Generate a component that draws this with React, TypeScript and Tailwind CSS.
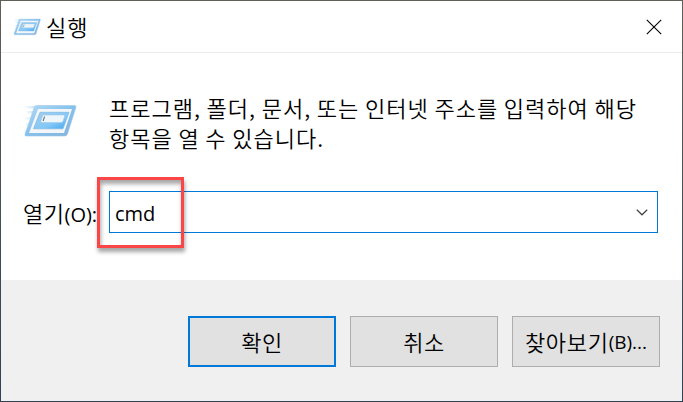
import React from 'react';

type IconProps = { className: string };

const RunIcon: React.FC<IconProps> = ({ className }) => (
  <svg className={className} viewBox="0 0 54 34" fill="none">
    <defs>
      <linearGradient id="frame" x1="0" y1="0" x2="1" y2="1">
        <stop offset="0" stopColor="#b4dbf6" />
        <stop offset="0.5" stopColor="#84c1ee" />
        <stop offset="1" stopColor="#86b2da" />
      </linearGradient>
      <linearGradient id="panel" x1="0" y1="0" x2="1" y2="1">
        <stop offset="0" stopColor="#a5cdeb" />
        <stop offset="0.6" stopColor="#84c8f6" />
        <stop offset="1" stopColor="#41a5ee" />
      </linearGradient>
      <linearGradient id="trail" x1="0" y1="0" x2="1" y2="0">
        <stop offset="0" stopColor="#d5eafa" stopOpacity="0" />
        <stop offset="1" stopColor="#b5d9f2" />
      </linearGradient>
    </defs>
    <path d="M1 2h13v2.500H1zM4 7h9v2.500H4zM0 13h11v2.500H0zM3 19h6v2.500H3zM0 25h7v2.500H0z" fill="url(#trail)" />
    <path d="M13.500 1.500H51.500q2 0 1.400 2L44.500 30q-.6 2-2.500 2H3q-1.500 0-1-2L11.500 3q.5-1.500 2-1.500z" fill="url(#frame)" stroke="#a0c8e6" strokeWidth=".6" />
    <path d="M15 5h34l-8 24H6z" fill="#f4f6fa" />
    <path d="M17 8.300H46l-6 16.500H10.500z" fill="url(#panel)" stroke="#7db8e4" strokeWidth=".7" />
    <path d="M20.500 11h20q1.500 0 1 1.500l-1.400 4.500q-.5 1.500-2 1.500H19q-1.500 0-1-1.500l1.300-4.500q.4-1.500 1.200-1.500z" fill="#eef5fb" stroke="#a3caea" strokeWidth=".6" />
    <path d="M21.500 12.500l-1.300 4.500" stroke="#59636c" strokeWidth="1" />
  </svg>
);

const CloseIcon: React.FC<IconProps> = ({ className }) => (
  <svg className={className} viewBox="0 0 16 16" fill="none">
    <path d="M.8.8l14.400 14.400M15.200.8L.8 15.200" stroke="#000" strokeWidth="1.100" />
  </svg>
);

const ChevronIcon: React.FC<IconProps> = ({ className }) => (
  <svg className={className} viewBox="0 0 12 7" fill="none">
    <path d="M.8.800L6 5.800 11.200.8" stroke="#444" strokeWidth="1.200" />
  </svg>
);

const App: React.FC = () => (
  <div className="flex h-[402px] w-[683px] flex-col bg-gradient-to-b from-[#605f58] to-[#2f4254] p-px font-['Open_Sans','Noto_Sans_CJK_KR',sans-serif] text-black">
    {/* Title bar */}
    <header className="flex h-[52px] shrink-0 items-center border-b border-[#ececec] bg-white pr-[20px] pl-[12px]">
      <RunIcon className="h-[18px] w-[28px]" />
      <h1 className="ml-[5px] pb-[2px] font-['Noto_Sans_CJK_KR',sans-serif] text-[22px] leading-[30px] font-[350] tracking-[1px]">실행</h1>
      <CloseIcon className="ml-auto h-4 w-4" />
    </header>

    {/* Message and command input */}
    <main className="h-[227px] shrink-0 bg-white pr-[24px] pl-[22px]">
      <div className="flex pt-[39px]">
        <RunIcon className="mt-[12px] h-[34px] w-[54px]" />
        <p className="ml-[32px] font-['Noto_Sans_CJK_KR',sans-serif] text-[22px] leading-[30px] font-[350] tracking-[1px] whitespace-nowrap [word-spacing:-0.2px]">
          프로그램, 폴더, 문서, 또는 인터넷 주소를 입력하여 해당
          <br />
          항목을 열 수 있습니다.
        </p>
      </div>

      <div className="relative mt-[39px] flex items-center">
        <label htmlFor="command" className="flex w-[86px] items-center whitespace-nowrap">
          <span className="font-['Noto_Sans_CJK_KR',sans-serif] text-[22px] leading-[30px] font-[350] tracking-[0.5px]">열기</span>
          <span className="pt-[5px] text-[20px] leading-[30px]">(O):</span>
        </label>
        <div className="flex h-[42px] flex-1 items-center border border-[#0078d7] pr-[9px] pl-[5px]">
          <input
            id="command"
            defaultValue="cmd"
            className="min-w-0 flex-1 pt-[3px] text-[20px] leading-[30px] outline-none"
          />
          <ChevronIcon className="h-[7px] w-[12px]" />
        </div>
        {/* Highlight around the typed command */}
        <div className="absolute top-[-14px] left-[74px] h-[71px] w-[87px] border-[3px] border-[#fa4646] shadow-[1px_4px_4px_rgba(0,0,0,0.35),inset_1px_4px_4px_rgba(0,0,0,0.35)]" />
      </div>
    </main>

    {/* Actions */}
    <footer className="flex flex-1 items-start justify-end gap-[14px] bg-[#f0f0f0] pt-[36px] pr-[22px] font-[350]">
      <button className="h-[51px] w-[148px] border-2 border-[#0078d7] bg-[#e1e1e1] font-['Noto_Sans_CJK_KR',sans-serif] text-[22px] tracking-[0.5px]">확인</button>
      <button className="h-[51px] w-[148px] border border-[#adadad] bg-[#e1e1e1] font-['Noto_Sans_CJK_KR',sans-serif] text-[22px] tracking-[0.5px]">취소</button>
      <button className="flex h-[51px] w-[148px] items-center justify-center border border-[#adadad] bg-[#e1e1e1] whitespace-nowrap">
        <span className="font-['Noto_Sans_CJK_KR',sans-serif] text-[22px] tracking-[0.7px]">찾아보기</span>
        <span className="pt-[2px] text-[19px] font-normal">(B)...</span>
      </button>
    </footer>
  </div>
);

export default App;
